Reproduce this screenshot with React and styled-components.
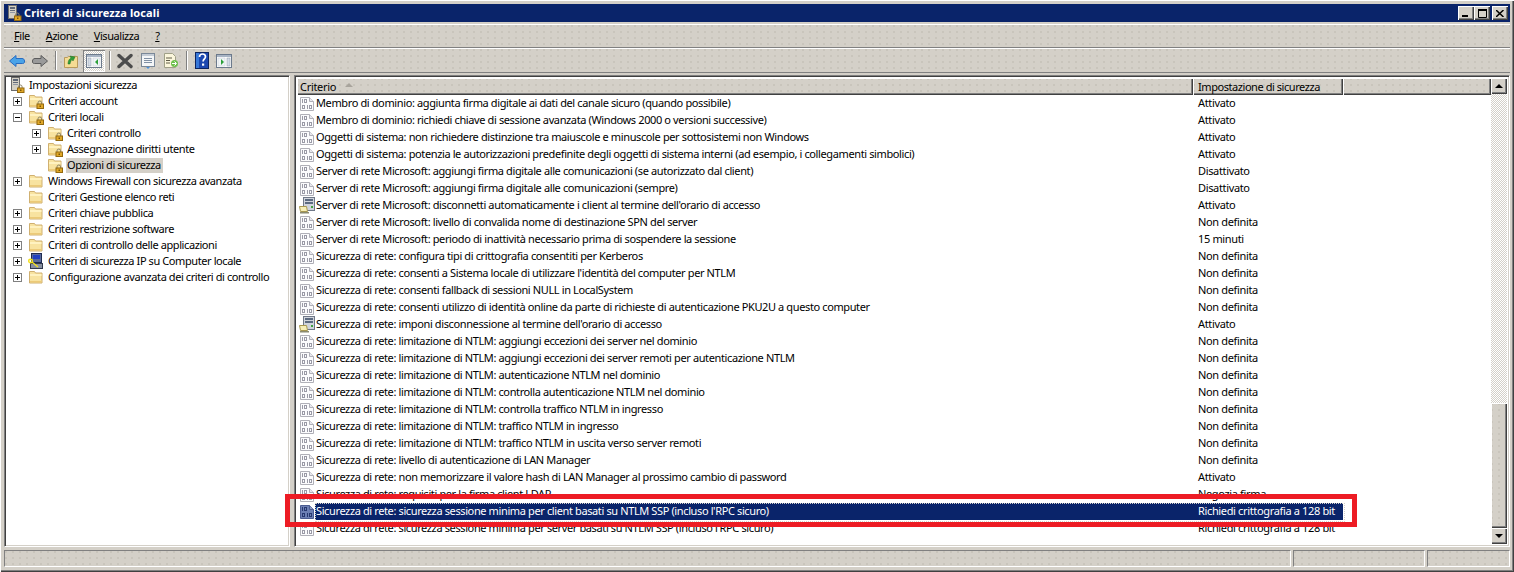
import React from "react";
import styled, { createGlobalStyle } from "styled-components";

const FACE = "#d4d0c8";
const dots = `radial-gradient(circle at 1px 1px, #c9c5bc 0.8px, transparent 1px)`;

const Global = createGlobalStyle`
  html, body { margin: 0; padding: 0; height: 100%; overflow: hidden; background: ${FACE}; }
  #root { height: 100%; }
  * { box-sizing: border-box; }
`;

const Shell = styled.div`
  width: 1514px; height: 572px; display: flex; flex-direction: column;
  padding: 4px 4px 5px 4px; background: ${FACE};
  box-shadow: inset 1px 1px 0 #fff, inset -1px -1px 0 #404040, inset -2px -2px 0 #808080;
  font: 11px/13px "Noto Sans", "DejaVu Sans", sans-serif; color: #000;
`;
const TitleBar = styled.div`
  height: 18px; flex: none; background: #0a246a; display: flex; align-items: center; padding: 0 2px 0 4px;
`;
const TitleText = styled.span`
  color: #fff; font-weight: 700; margin-left: 2px; flex: 1; letter-spacing: 0.1px; position: relative; top: -1px;
`;
const WinButton = styled.button`
  width: 16px; height: 14px; padding: 0; margin: 0; margin-left: ${p => p.$gap}px; border: 0; background: ${FACE};
  box-shadow: inset 1px 1px 0 #fff, inset -1px -1px 0 #404040, inset -2px -2px 0 #808080;
  display: flex; align-items: center; justify-content: center;
`;
const Band = styled.div`
  flex: none; height: ${p => p.$h}px; margin-top: ${p => p.$mt}px; display: flex; align-items: center;
  background-color: ${FACE}; background-image: ${dots}; background-size: 7px 6px;
  border-top: 1px solid #fff; border-bottom: 1px solid #808080;
  padding-left: ${p => p.$pl}px;
`;
const MenuItem = styled.span`
  margin-right: ${p => p.$mr}px; letter-spacing: -0.45px; position: relative; top: -1px;
  & u { text-decoration: underline; }
`;
const ToolIcon = styled.span`
  display: flex; width: ${p => (p.$pressed ? 22 : 16)}px; height: ${p => (p.$pressed ? 22 : 16)}px; align-items: center; justify-content: center;
  margin-left: ${p => p.$ml}px; flex: none;
  ${p => p.$pressed && `background: repeating-conic-gradient(#fff 0 25%, ${FACE} 0 50%) 0 0 / 2px 2px; box-shadow: inset 1px 1px 0 #808080, inset -1px -1px 0 #fff;`}
`;
const ToolSep = styled.span`
  width: 2px; height: 19px; flex: none; margin-left: ${p => p.$ml}px;
  border-left: 1px solid #808080; border-right: 1px solid #fff;
`;
const Panes = styled.div`
  flex: 1; min-height: 0; display: flex; margin-top: 2px;
`;
const Sunken = styled.div`
  background: #fff; position: relative; display: flex; flex-direction: column; overflow: hidden;
  border-top: 1px solid #808080; border-left: 1px solid #808080; border-right: 1px solid #fff; border-bottom: 1px solid #fff;
  box-shadow: inset 1px 1px 0 #404040, inset -1px -1px 0 ${FACE};
`;
const TreePane = styled(Sunken)`
  width: 286px; flex: none; padding: 1px 0 0 2px; margin-right: 4px;
`;
const ListPane = styled(Sunken)`
  flex: 1; min-width: 0; padding: 2px; flex-direction: row;
`;
const TreeRow = styled.div`
  height: 16px; display: flex; align-items: center; padding-left: ${p => p.$pl}px; flex: none;
`;
const Expander = styled.span`
  width: 9px; height: 9px; flex: none; border: 1px solid #808080; background: #fff; position: relative; margin-right: 6px;
  &::before { content: ""; position: absolute; left: 1px; right: 1px; top: 3px; height: 1px; background: #000; }
  &::after { content: ${p => (p.$open ? "none" : '""')}; position: absolute; top: 1px; bottom: 1px; left: 3px; width: 1px; background: #000; }
`;
const ExpanderGap = styled.span`
  width: 15px; flex: none;
`;
const TreeLabel = styled.span`
  margin-left: 3px; padding: 0 2px 1px 1px; height: 15px; white-space: nowrap; letter-spacing: -0.41px; flex: none;
  background: ${p => (p.$sel ? "#d4d0c8" : "transparent")};
`;
const ListBody = styled.div`
  flex: 1; min-width: 0; display: flex; flex-direction: column; overflow: hidden;
`;
const Header = styled.div`
  height: 17px; flex: none; display: grid; grid-template-columns: 896px 150px 1fr;
`;
const HeaderCell = styled.div`
  background-color: ${FACE}; background-image: ${dots}; background-size: 7px 6px;
  box-shadow: inset 1px 1px 0 #fff, inset -1px -1px 0 #404040, inset -2px -2px 0 #808080;
  padding: 0 0 1px ${p => p.$pl ?? 5}px; display: flex; align-items: center; letter-spacing: ${p => p.$ls ?? -0.44}px;
`;
const SortArrow = styled.span`
  margin-left: 9px; width: 0; height: 0; margin-bottom: 2px;
  border-left: 4px solid transparent; border-right: 4px solid transparent; border-bottom: 4px solid #a8a49c;
`;
const Rows = styled.div`
  display: flex; flex-direction: column;
`;
const Row = styled.div`
  height: 17px; flex: none; display: grid; grid-template-columns: 896px 150px 1fr; position: relative;
  ${p => p.$sel && `&::after { content: ""; position: absolute; left: 18px; width: 1028px; top: 0; height: 17px; border: 1px dotted #d4d0c8; }`}
`;
const NameCell = styled.div`
  display: flex; align-items: center; padding-left: 2px; min-width: 0;
`;
const NameText = styled.span`
  padding: 0 0 1px 1px; white-space: nowrap; letter-spacing: -0.38px;
  height: 17px; line-height: 16px; flex: 1;
  color: ${p => (p.$sel ? "#fff" : "#000")};
  background: ${p => (p.$sel ? "#0a246a" : "transparent")};
`;
const ValueCell = styled.div`
  padding-left: 5px; white-space: nowrap; line-height: 16px; letter-spacing: -0.35px;
  color: ${p => (p.$sel ? "#fff" : "#000")};
  background: ${p => (p.$sel ? "#0a246a" : "transparent")};
`;
const ScrollBar = styled.div`
  width: 16px; flex: none; display: flex; flex-direction: column;
  background: repeating-conic-gradient(#fff 0 25%, ${FACE} 0 50%) 0 0 / 2px 2px;
`;
const ScrollButton = styled.div`
  height: 16px; flex: none; background: ${FACE}; display: flex; align-items: center; justify-content: center;
  box-shadow: inset 1px 1px 0 #fff, inset -1px -1px 0 #404040, inset -2px -2px 0 #808080;
  &::after { content: ""; width: 0; height: 0; border-left: 4px solid transparent; border-right: 4px solid transparent;
    ${p => (p.$up ? "border-bottom: 4px solid #000;" : "border-top: 4px solid #000;")} }
`;
const ScrollTrack = styled.div`
  flex: 1;
`;
const ScrollThumb = styled.div`
  height: 125px; flex: none; background-color: ${FACE}; background-image: ${dots}; background-size: 7px 6px;
  box-shadow: inset 1px 1px 0 #fff, inset -1px -1px 0 #404040, inset -2px -2px 0 #808080;
`;
const Highlight = styled.div`
  position: absolute; left: 285px; top: 494px; width: 1072px; height: 33px; border: 5px solid #ed1c24; pointer-events: none;
`;
const StatusBar = styled.div`
  flex: none; height: 17px; margin-top: 3px; display: grid; grid-template-columns: 1287px 132px 1fr; gap: 2px;
`;
const StatusCell = styled.div`
  background-color: ${FACE}; background-image: ${dots}; background-size: 7px 6px;
  border-top: 1px solid #808080; border-left: 1px solid #808080; border-right: 1px solid #fff; border-bottom: 1px solid #fff;
`;

const Lock = ({ x = 8, y = 8 }) => (
  <g transform={`translate(${x} ${y})`}>
    <path d="M1.500 3V1.800a1.800 1.800 0 0 1 3.600 0V3" fill="none" stroke="#8a8468" />
    <rect x=".5" y="3" width="6.500" height="4.500" fill="#e0a828" stroke="#94690e" />
    <rect x="3" y="4.500" width="1.500" height="1.500" fill="#7a5408" />
  </g>
);
const Folder = ({ lock }) => (
  <svg width="16" height="16" viewBox="0 0 16 16" style={{ flex: "none" }}>
    <path d="M1.500 14V2.500h5l1 1.500h6.500v10z" fill="#f8e3a0" stroke="#d0b070" />
    <rect x="2" y="5" width="11.500" height="2" fill="#fff2c0" />
    <rect x="2" y="12" width="11.500" height="1.500" fill="#ecca78" />
    {lock && <Lock x={8.500} y={8} />}
  </svg>
);
const PolicyDoc = ({ sel }) => (
  <svg width="16" height="16" viewBox="0 0 16 16" style={{ flex: "none" }}>
    <path d="M1.500 1.500h9l4 4v9h-13z" fill={sel ? "#6c7fb4" : "#fbfbfd"} stroke={sel ? "#4a5a90" : "#b0b0b8"} />
    <path d="M10.500 1.500v4h4" fill={sel ? "#8a9ac4" : "#e8e8ee"} stroke={sel ? "#4a5a90" : "#b0b0b8"} />
    <g fill={sel ? "#26376f" : "#9a9aa6"}>
      <rect x="3" y="3" width="1" height="4" /><rect x="5" y="3" width="3" height="1" /><rect x="5" y="6" width="3" height="1" /><rect x="5" y="3" width="1" height="4" /><rect x="7" y="3" width="1" height="4" />
      <rect x="3" y="9" width="3" height="1" /><rect x="3" y="12" width="3" height="1" /><rect x="3" y="9" width="1" height="4" /><rect x="5" y="9" width="1" height="4" /><rect x="8" y="9" width="1" height="4" />
      <rect x="10" y="9" width="3" height="1" /><rect x="10" y="12" width="3" height="1" /><rect x="10" y="9" width="1" height="4" /><rect x="12" y="9" width="1" height="4" />
    </g>
  </svg>
);
const ServerLock = () => (
  <svg width="14" height="16" viewBox="0 0 14 16" style={{ flex: "none" }}>
    <rect x=".5" y=".5" width="8" height="13" fill="#d4d0c4" stroke="#6c6c6c" />
    <rect x="2" y="2" width="5" height="2" fill="#606878" />
    <rect x="2" y="5" width="5" height="1" fill="#606878" />
    <rect x="2" y="7" width="5" height="1" fill="#9098a4" />
    <Lock x={6} y={8} />
  </svg>
);
const ServerDoc = () => (
  <svg width="16" height="17" viewBox="0 0 16 17" style={{ flex: "none" }}>
    <rect x="4.500" y=".5" width="11" height="13" fill="#d0d4dc" stroke="#707888" />
    <rect x="6" y="2" width="8" height="2" fill="#5c6a80" />
    <rect x="6" y="5" width="8" height="2" fill="#5c6a80" />
    <rect x="12" y="9" width="2" height="2" fill="#40a040" />
    <path d="M.5 9.500h7l1 5h-7z" fill="#f6eeb8" stroke="#a89850" />
    <rect x="1" y="15" width="9" height="1.500" fill="#8a8a70" />
  </svg>
);
const ComputerKey = () => (
  <svg width="16" height="17" viewBox="0 0 16 17" style={{ flex: "none" }}>
    <rect x="3.500" y=".5" width="10" height="9" fill="#5a6a9a" stroke="#1e2a50" />
    <rect x="5" y="2" width="7" height="4" fill="#2040c0" />
    <rect x="2.500" y="10.500" width="12" height="5" fill="#8890a0" stroke="#30384c" />
    <circle cx="2.500" cy="8" r="1.800" fill="none" stroke="#f4e020" strokeWidth="1.400" />
    <path d="M4 9l6 5" stroke="#f4e020" strokeWidth="1.400" />
  </svg>
);
const BackIcon = () => (
  <svg width="16" height="16" viewBox="0 0 16 16"><path d="M.5 8 7 2.500v3h6c1.500 0 2.500 1 2.500 2.500v1c0 1-1 1.500-2 1.500H7v3z" fill="#4aa3e8" stroke="#2a6cc0" /></svg>
);
const ForwardIcon = () => (
  <svg width="16" height="16" viewBox="0 0 16 16"><path d="M15.500 8 9 2.500v3H3c-1.500 0-2.500 1-2.500 2.500v1c0 1 1 1.500 2 1.500H9v3z" fill="#9a9a9a" stroke="#5c5c5c" /></svg>
);
const UpIcon = () => (
  <svg width="16" height="16" viewBox="0 0 16 16">
    <path d="M1.500 4.500h3l1-1h9v11h-13z" fill="#f5dc94" stroke="#b89a5c" />
    <path d="M5 11c0-3 1-5 3-6L7 3l5 1-2 4-1-1.500c-1 1-1.500 2.500-2 4.500z" fill="#2f9e3a" stroke="#1d7028" strokeWidth=".5" />
  </svg>
);
const PaneIcon = ({ right }) => (
  <svg width="16" height="14" viewBox="0 0 16 14">
    <rect x=".5" y=".5" width="15" height="13" fill="#fff" stroke="#6c7a8c" />
    <rect x="1" y="1" width="14" height="2" fill="#a8b4c4" />
    <rect x={right ? 11 : 2} y="4" width="3" height="8" fill="#d4dce6" stroke="#8c98a8" strokeWidth=".5" />
    <rect x={right ? 2 : 7} y="4" width="7" height="8" fill="#f0f4f8" stroke="#c0c8d0" strokeWidth=".5" />
    <path d={right ? "M5 5l3 3-3 3z" : "M12 5l-3 3 3 3z"} fill="#2da03a" />
  </svg>
);
const DeleteIcon = () => (
  <svg width="16" height="16" viewBox="0 0 16 16">
    <path d="M2 2.500l12 11M14 2.500l-12 11" stroke="#4c4c4c" strokeWidth="3.400" strokeLinecap="round" />
  </svg>
);
const PropsIcon = () => (
  <svg width="16" height="16" viewBox="0 0 16 16">
    <rect x="1.500" y=".5" width="13" height="13" fill="#f4f6f8" stroke="#7a8898" />
    <rect x="2" y="1" width="12" height="2" fill="#c4ccd6" />
    <path d="M4 5.500h8M4 7.500h8M4 9.500h8" stroke="#8090a4" />
    <path d="M6 14h4l-2 2z" fill="#4a90d8" />
  </svg>
);
const ExportIcon = () => (
  <svg width="16" height="16" viewBox="0 0 16 16">
    <path d="M1.500 .5h8l3 3v11h-11z" fill="#fbf6dc" stroke="#a0a088" />
    <path d="M3 5h6M3 7.500h4M3 10h4" stroke="#605c48" />
    <circle cx="11.500" cy="10.500" r="3.500" fill="#6cc04c" />
    <path d="M9 10.500h4M11.500 8.500l2 2-2 2" stroke="#fff" fill="none" />
  </svg>
);
const HelpIcon = () => (
  <svg width="14" height="17" viewBox="0 0 14 17">
    <rect x=".5" y=".5" width="13" height="16" fill="#1c48b0" stroke="#0c2460" />
    <rect x="1" y="1" width="3" height="15" fill="#3878d8" />
    <path d="M4.500 5c0-2 1.500-3 3-3s3 1 3 2.800c0 2-2.400 2.200-2.400 4.700" fill="none" stroke="#fff" strokeWidth="1.700" />
    <rect x="7" y="11.500" width="2.200" height="2.200" fill="#fff" />
  </svg>
);
const MinGlyph = () => <svg width="8" height="8" viewBox="0 0 8 8"><rect x="0" y="6" width="6" height="2" fill="#000" /></svg>;
const MaxGlyph = () => <svg width="9" height="9" viewBox="0 0 9 9"><path d="M.5 1.500h8v7h-8z" fill="none" stroke="#000" /><rect x="0" y="0" width="9" height="2" fill="#000" /></svg>;
const CloseGlyph = () => <svg width="8" height="7" viewBox="0 0 8 7"><path d="M0 0l7.500 7M7.500 0L0 7" stroke="#000" strokeWidth="1.500" /></svg>;

const tree = [
  { label: "Impostazioni sicurezza", level: 0, icon: "root" },
  { label: "Criteri account", level: 1, ex: "+", icon: "lock" },
  { label: "Criteri locali", level: 1, ex: "-", icon: "lock" },
  { label: "Criteri controllo", level: 2, ex: "+", icon: "lock" },
  { label: "Assegnazione diritti utente", level: 2, ex: "+", icon: "lock" },
  { label: "Opzioni di sicurezza", level: 2, icon: "lock", sel: true },
  { label: "Windows Firewall con sicurezza avanzata", level: 1, ex: "+", icon: "folder" },
  { label: "Criteri Gestione elenco reti", level: 1, icon: "folder" },
  { label: "Criteri chiave pubblica", level: 1, ex: "+", icon: "folder" },
  { label: "Criteri restrizione software", level: 1, ex: "+", icon: "folder" },
  { label: "Criteri di controllo delle applicazioni", level: 1, ex: "+", icon: "folder" },
  { label: "Criteri di sicurezza IP su Computer locale", level: 1, ex: "+", icon: "key" },
  { label: "Configurazione avanzata dei criteri di controllo", level: 1, ex: "+", icon: "folder" },
];

const ND = "Non definita";
const rows = [
  ["Membro di dominio: aggiunta firma digitale ai dati del canale sicuro (quando possibile)", "Attivato"],
  ["Membro di dominio: richiedi chiave di sessione avanzata (Windows 2000 o versioni successive)", "Attivato"],
  ["Oggetti di sistema: non richiedere distinzione tra maiuscole e minuscole per sottosistemi non Windows", "Attivato"],
  ["Oggetti di sistema: potenzia le autorizzazioni predefinite degli oggetti di sistema interni (ad esempio, i collegamenti simbolici)", "Attivato"],
  ["Server di rete Microsoft: aggiungi firma digitale alle comunicazioni (se autorizzato dal client)", "Disattivato"],
  ["Server di rete Microsoft: aggiungi firma digitale alle comunicazioni (sempre)", "Disattivato"],
  ["Server di rete Microsoft: disconnetti automaticamente i client al termine dell'orario di accesso", "Attivato", "server"],
  ["Server di rete Microsoft: livello di convalida nome di destinazione SPN del server", ND],
  ["Server di rete Microsoft: periodo di inattività necessario prima di sospendere la sessione", "15 minuti"],
  ["Sicurezza di rete: configura tipi di crittografia consentiti per Kerberos", ND],
  ["Sicurezza di rete: consenti a Sistema locale di utilizzare l'identità del computer per NTLM", ND],
  ["Sicurezza di rete: consenti fallback di sessioni NULL in LocalSystem", ND],
  ["Sicurezza di rete: consenti utilizzo di identità online da parte di richieste di autenticazione PKU2U a questo computer", ND],
  ["Sicurezza di rete: imponi disconnessione al termine dell'orario di accesso", "Attivato", "server"],
  ["Sicurezza di rete: limitazione di NTLM: aggiungi eccezioni dei server nel dominio", ND],
  ["Sicurezza di rete: limitazione di NTLM: aggiungi eccezioni dei server remoti per autenticazione NTLM", ND],
  ["Sicurezza di rete: limitazione di NTLM: autenticazione NTLM nel dominio", ND],
  ["Sicurezza di rete: limitazione di NTLM: controlla autenticazione NTLM nel dominio", ND],
  ["Sicurezza di rete: limitazione di NTLM: controlla traffico NTLM in ingresso", ND],
  ["Sicurezza di rete: limitazione di NTLM: traffico NTLM in ingresso", ND],
  ["Sicurezza di rete: limitazione di NTLM: traffico NTLM in uscita verso server remoti", ND],
  ["Sicurezza di rete: livello di autenticazione di LAN Manager", ND],
  ["Sicurezza di rete: non memorizzare il valore hash di LAN Manager al prossimo cambio di password", "Attivato"],
  ["Sicurezza di rete: requisiti per la firma client LDAP", "Negozia firma"],
  ["Sicurezza di rete: sicurezza sessione minima per client basati su NTLM SSP (incluso l'RPC sicuro)", "Richiedi crittografia a 128 bit", "sel"],
  ["Sicurezza di rete: sicurezza sessione minima per server basati su NTLM SSP (incluso l'RPC sicuro)", "Richiedi crittografia a 128 bit"],
];

const treeIcon = k => {
  if (k === "root") return <ServerLock />;
  if (k === "lock") return <Folder lock />;
  if (k === "key") return <ComputerKey />;
  return <Folder />;
};

export default function App() {
  return (
    <Shell>
      <Global />
      <TitleBar>
        <ServerLock />
        <TitleText>Criteri di sicurezza locali</TitleText>
        <WinButton $gap={0}><MinGlyph /></WinButton>
        <WinButton $gap={0}><MaxGlyph /></WinButton>
        <WinButton $gap={2}><CloseGlyph /></WinButton>
      </TitleBar>
      <Band $h={24} $mt={2} $pl={10}>
        <MenuItem $mr={16}><u>F</u>ile</MenuItem>
        <MenuItem $mr={16}><u>A</u>zione</MenuItem>
        <MenuItem $mr={16}><u>V</u>isualizza</MenuItem>
        <MenuItem $mr={0}><u>?</u></MenuItem>
      </Band>
      <Band $h={25} $mt={0} $pl={5}>
        <ToolIcon $ml={0}><BackIcon /></ToolIcon>
        <ToolIcon $ml={7}><ForwardIcon /></ToolIcon>
        <ToolSep $ml={7} />
        <ToolIcon $ml={6}><UpIcon /></ToolIcon>
        <ToolIcon $ml={4} $pressed><PaneIcon /></ToolIcon>
        <ToolSep $ml={4} />
        <ToolIcon $ml={6}><DeleteIcon /></ToolIcon>
        <ToolIcon $ml={7}><PropsIcon /></ToolIcon>
        <ToolIcon $ml={7}><ExportIcon /></ToolIcon>
        <ToolSep $ml={7} />
        <ToolIcon $ml={6}><HelpIcon /></ToolIcon>
        <ToolIcon $ml={6}><PaneIcon right /></ToolIcon>
      </Band>
      <Panes>
        <TreePane>
          {tree.map(t => (
            <TreeRow key={t.label} $pl={t.level === 0 ? 4 : t.level === 1 ? 6 : 25}>
              {t.level > 0 && (t.ex ? <Expander $open={t.ex === "-"} /> : <ExpanderGap />)}
              {treeIcon(t.icon)}
              <TreeLabel $sel={t.sel}>{t.label}</TreeLabel>
            </TreeRow>
          ))}
        </TreePane>
        <ListPane>
          <ListBody>
            <Header>
              <HeaderCell $pl={3} $ls={-0.3}>Criterio<SortArrow /></HeaderCell>
              <HeaderCell>Impostazione di sicurezza</HeaderCell>
              <HeaderCell />
            </Header>
            <Rows>
              {rows.map(([name, value, kind]) => (
                <Row key={name} $sel={kind === "sel"}>
                  <NameCell>
                    {kind === "server" ? <ServerDoc /> : <PolicyDoc sel={kind === "sel"} />}
                    <NameText $sel={kind === "sel"}>{name}</NameText>
                  </NameCell>
                  <ValueCell $sel={kind === "sel"}>{value}</ValueCell>
                </Row>
              ))}
            </Rows>
          </ListBody>
          <ScrollBar>
            <ScrollButton $up />
            <ScrollTrack />
            <ScrollThumb />
            <ScrollButton />
          </ScrollBar>
        </ListPane>
      </Panes>
      <StatusBar>
        <StatusCell />
        <StatusCell />
        <StatusCell />
      </StatusBar>
      <Highlight />
    </Shell>
  );
}
